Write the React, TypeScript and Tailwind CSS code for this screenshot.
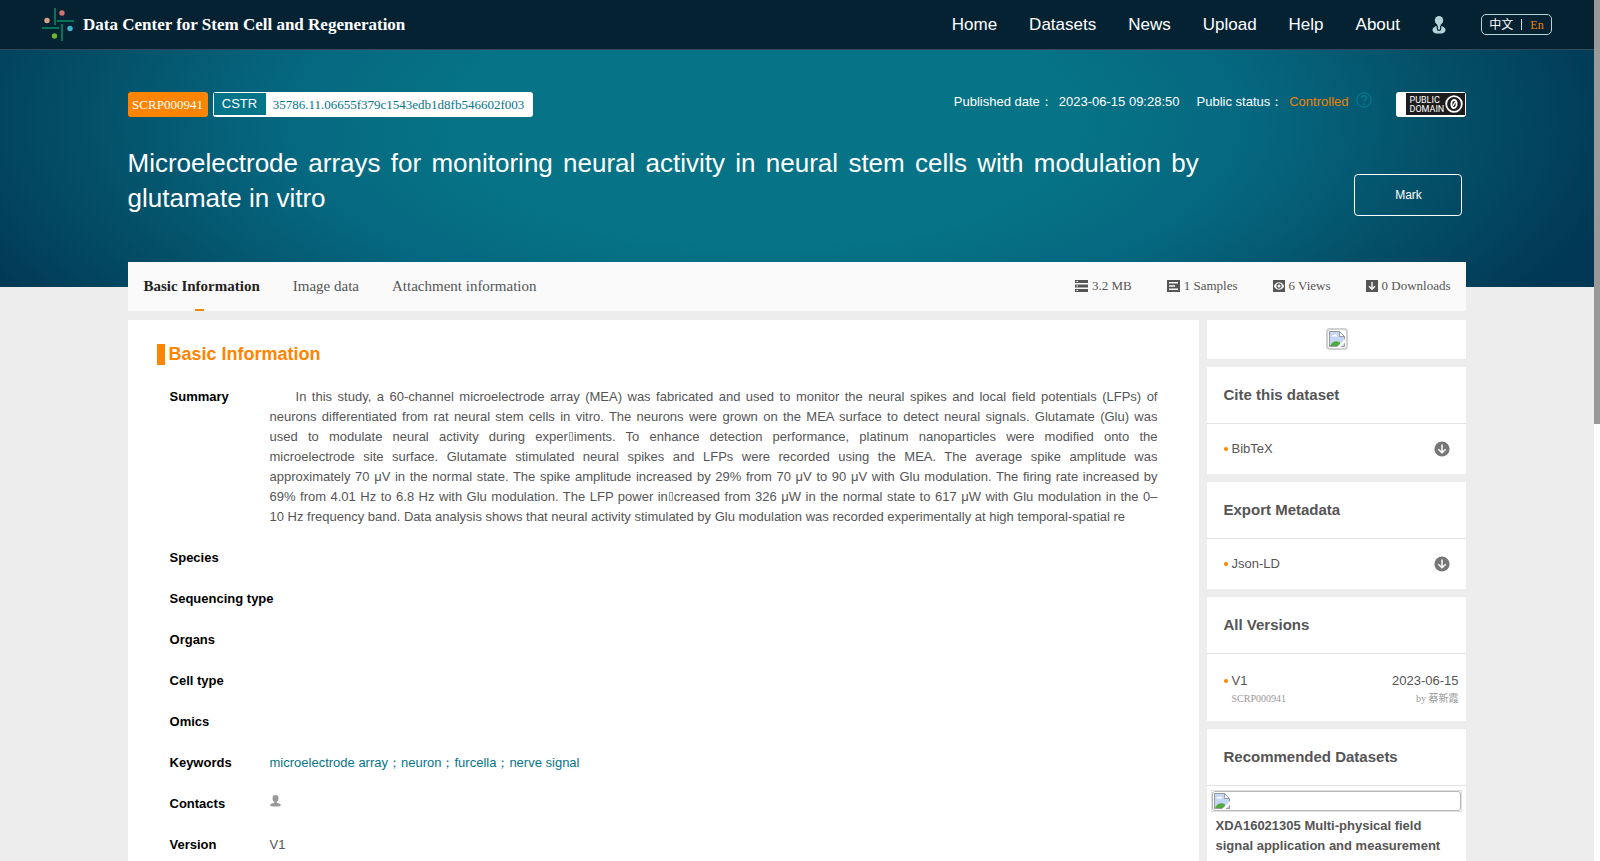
import type { ReactNode } from "react";

const NAV_ITEMS = ["Home", "Datasets", "News", "Upload", "Help", "About"];

// "|" marks an unprintable character in the submitted text
const SUMMARY_LINES = [
  "In this study, a 60-channel microelectrode array (MEA) was fabricated and used to monitor the neural spikes and local field potentials (LFPs) of",
  "neurons differentiated from rat neural stem cells in vitro. The neurons were grown on the MEA surface to detect neural signals. Glutamate (Glu) was",
  "used to modulate neural activity during exper|iments. To enhance detection performance, platinum nanoparticles were modified onto the",
  "microelectrode site surface. Glutamate stimulated neural spikes and LFPs were recorded using the MEA. The average spike amplitude was",
  "approximately 70 μV in the normal state. The spike amplitude increased by 29% from 70 μV to 90 μV with Glu modulation. The firing rate increased by",
  "69% from 4.01 Hz to 6.8 Hz with Glu modulation. The LFP power in|creased from 326 μW in the normal state to 617 μW with Glu modulation in the 0–",
  "10 Hz frequency band. Data analysis shows that neural activity stimulated by Glu modulation was recorded experimentally at high temporal-spatial re",
];

const KEYWORDS = ["microelectrode array", "neuron", "furcella", "nerve signal"];

/* ---------- Icons ---------- */

function Logo() {
  return (
    <svg width="34" height="34" viewBox="0 0 34 34" aria-hidden="true">
      <g fill="#04755a">
        <rect x="12" y="0" width="2" height="17" />
        <rect x="15" y="12" width="17" height="2" />
        <rect x="0" y="19" width="17" height="2" />
        <rect x="19" y="16" width="2" height="17" />
      </g>
      <circle cx="20" cy="5" r="2.700" fill="#d9706c" />
      <circle cx="5" cy="12.500" r="2.700" fill="#d9a184" />
      <circle cx="28" cy="20.500" r="2.700" fill="#3fb2cf" />
      <circle cx="12.500" cy="28" r="2.700" fill="#6cb52d" />
    </svg>
  );
}

function UserIcon() {
  return (
    <svg width="14" height="18" viewBox="0 0 14 18" fill="#b7d3da" aria-hidden="true">
      <ellipse cx="7" cy="4.400" rx="4.200" ry="4.400" />
      <path d="M5.200 8h3.600v2c3 .5 4.700 1.900 4.700 3.900 0 2.300-2.500 3.700-6.500 3.700S.5 16.200.5 13.900c0-2 1.700-3.400 4.700-3.900z" />
      <path d="M5.300 9.800v3c0 1 .7 1.600 1.700 1.600s1.700-.6 1.700-1.600v-3" fill="none" stroke="#052233" strokeWidth="1.200" />
    </svg>
  );
}

function HelpIcon() {
  return (
    <svg width="16" height="16" viewBox="0 0 16 16" fill="none" stroke="#048094" aria-hidden="true">
      <circle cx="8" cy="8" r="7.200" />
      <path d="M5.500 6.200c0-1.500 1.100-2.400 2.500-2.400s2.500.9 2.500 2.200c0 1.600-2.500 1.800-2.500 3.700M8 11.200v1.500" strokeWidth="1.200" />
    </svg>
  );
}

function SizeIcon() {
  return (
    <svg width="13" height="12" viewBox="0 0 13 12" fill="#555" aria-hidden="true">
      <path d="M0 0h13v3H0zM0 4.500h13v3H0zM0 9h13v3H0z" />
      <path d="M1.500 1h1.500v1H1.500zM1.500 5.500h1.500v1H1.500zM1.500 10h1.500v1H1.500z" fill="#fff" />
    </svg>
  );
}

function SampleIcon() {
  return (
    <svg width="13" height="12" viewBox="0 0 13 12" aria-hidden="true">
      <path d="M0 0h13v12H0z" fill="#555" />
      <path d="M2 2h9v1.600H2zM2 5.200h6v1.600H2zM2 8.400h9V10H2z" fill="#fafafa" />
    </svg>
  );
}

function ViewIcon() {
  return (
    <svg width="12" height="12" viewBox="0 0 12 12" aria-hidden="true">
      <path d="M0 0h12v12H0z" fill="#555" />
      <path d="M.8 6C2 3.500 3.800 2.200 6 2.200S10 3.500 11.200 6C10 8.500 8.200 9.800 6 9.800S2 8.500.8 6z" fill="#fafafa" />
      <circle cx="6" cy="6" r="2.100" fill="none" stroke="#555" strokeWidth="1.100" />
    </svg>
  );
}

function DownloadIcon() {
  return (
    <svg width="12" height="12" viewBox="0 0 12 12" aria-hidden="true">
      <path d="M0 0h12v12H0z" fill="#555" />
      <path d="M6 2v7M3 6.200l3 3 3-3" fill="none" stroke="#fafafa" strokeWidth="1.400" />
    </svg>
  );
}

function CircleDownIcon() {
  return (
    <svg width="16" height="16" viewBox="0 0 16 16" aria-hidden="true">
      <circle cx="8" cy="8" r="7.600" fill="#777" />
      <path d="M8 3.500v8M4.300 8.200L8 11.800l3.700-3.600" fill="none" stroke="#fff" strokeWidth="1.500" />
    </svg>
  );
}

function ContactIcon() {
  return (
    <svg width="11" height="12" viewBox="0 0 11 12" fill="#999" aria-hidden="true">
      <ellipse cx="5.500" cy="3.400" rx="3" ry="3.400" />
      <path d="M4.200 6h2.600v1.800c2.200.4 4 1.200 4 2.400 0 1-2 1.300-5.300 1.300S.2 11.200.2 10.200c0-1.200 1.800-2 4-2.400z" />
    </svg>
  );
}

function BrokenImageIcon() {
  return (
    <svg width="16" height="16" viewBox="0 0 16 16" aria-hidden="true">
      <path d="M.5.500h10L15.500 5.500v10H.5z" fill="#c4d6f5" stroke="#9a9a9a" />
      <path d="M10.500.500v5h5z" fill="#fff" stroke="#9a9a9a" />
      <path d="M2.500 5.500a1.500 1.500 0 0 1 2-1.400 2 2 0 0 1 3.500 1.400z" fill="#fff" />
      <path d="M1 15c2-4.500 6-6 10-3.500V15z" fill="#53a93f" />
      <path d="M8 16l8-8v3.500L11.500 16z" fill="#fff" />
    </svg>
  );
}

function PublicDomainBadge() {
  return (
    <a href="#license" className="flex h-[25px] w-[70px] items-start justify-end rounded-[3px] bg-white p-px" aria-label="Public domain">
      <span className="flex h-[22px] w-[59px] items-center justify-between bg-[#1c1c1c] pl-[3px] pr-[2px] font-['Roboto',sans-serif] text-[9px] leading-[9px] text-white">
        <span className="pt-px">
          PUBLIC
          <br />
          DOMAIN
        </span>
        <svg width="18" height="18" viewBox="0 0 18 18" fill="none" stroke="#fff" aria-hidden="true">
          <circle cx="9" cy="9" r="7.800" strokeWidth="1.800" />
          <ellipse cx="9" cy="9" rx="2.600" ry="4" strokeWidth="1.900" />
          <path d="M7.800 11l2.600-4.200" strokeWidth="1.300" />
        </svg>
      </span>
    </a>
  );
}

/* ---------- Parts ---------- */

function Stat({ icon, label }: { icon: ReactNode; label: string }) {
  return (
    <span className="flex items-center gap-1">
      {icon}
      {label}
    </span>
  );
}

function SummaryLine({ text }: { text: string }) {
  const [before, after] = text.split("|");
  return (
    <span className="block whitespace-nowrap first:pl-[26px] [text-align-last:justify] last:[text-align-last:left]">
      {before}
      {after && (
        <>
          <span className="mx-px inline-block h-[9px] w-1 border border-[#999]"></span>
          {after}
        </>
      )}
    </span>
  );
}

function Row({ label, children }: { label: string; children?: ReactNode }) {
  return (
    <div className="flex">
      <dt className="w-[100px] shrink-0 whitespace-nowrap font-bold text-black">{label}</dt>
      <dd className="min-w-0 flex-1">{children}</dd>
    </div>
  );
}

function SideCard({ title, children }: { title: string; children: ReactNode }) {
  return (
    <section className="bg-white">
      <h2 className="border-b border-[#e2e2e2] px-4 text-[15px] font-bold leading-[56px]">{title}</h2>
      {children}
    </section>
  );
}

function Bullet() {
  return <span className="h-1 w-1 shrink-0 rounded-full bg-[#ff8400]"></span>;
}

function ExportLink({ label }: { label: string }) {
  return (
    <a href="#download" className="flex h-[50px] items-center gap-[3px] pl-[17px] pr-4">
      <Bullet />
      <span className="flex-1">{label}</span>
      <CircleDownIcon />
    </a>
  );
}

export default function App() {
  return (
    <div className="flex h-screen overflow-hidden bg-[#ededed] font-['Liberation_Sans',Arial,sans-serif] text-[13px] leading-5 text-[#555]">
      <div className="min-w-0 flex-1 overflow-hidden">
        {/* Top bar */}
        <header className="flex h-[50px] items-center justify-between border-b border-[#33495a] bg-[#052233] px-[42px] text-white">
          <a href="#home" className="flex items-center gap-[7px] font-['Liberation_Serif',serif] text-[17px] font-bold">
            <Logo />
            Data Center for Stem Cell and Regeneration
          </a>
          <nav className="flex items-center gap-8 text-[17px]">
            {NAV_ITEMS.map((item) => (
              <a key={item} href={`#${item.toLowerCase()}`}>
                {item}
              </a>
            ))}
            <a href="#account" aria-label="Account">
              <UserIcon />
            </a>
            <span className="ml-[3px] flex h-[21px] w-[71px] items-center justify-center gap-2 rounded-[5px] border border-[#b7d3da] font-['Liberation_Serif','Noto_Sans_CJK_SC',serif] text-[12px]">
              <a href="#zh">中文</a>
              <span className="h-[11px] w-px bg-[#d5dde0]"></span>
              <a href="#en" className="text-[#f08300]">
                En
              </a>
            </span>
          </nav>
        </header>

        {/* Dataset banner */}
        <div className="h-[237px] bg-[radial-gradient(ellipse_55%_150%_at_48%_30%,#067386_0%,#067386_35%,#056880_55%,#044f68_78%,#003754_100%)] px-[8%] pt-[42px] text-white">
          <div className="flex justify-between">
            <div className="flex gap-[5px] font-['Liberation_Serif',serif]">
              <span className="flex h-[25px] w-20 items-center justify-center rounded-[3px] bg-[#ff8400]">SCRP000941</span>
              <a href="#cstr" className="flex h-[25px] w-80 items-start rounded-[3px] bg-white p-px text-[#047588]">
                <span className="w-[52px] bg-[#047588] text-center font-['Liberation_Sans',sans-serif] leading-[22px] text-white">CSTR</span>
                <span className="flex-1 text-center leading-[23px]">35786.11.06655f379c1543edb1d8fb546602f003</span>
              </a>
            </div>
            <div className="flex items-start">
              <span className="mr-[17px] flex gap-[6px]">
                <span>Published date：</span>
                <span>2023-06-15 09:28:50</span>
              </span>
              <span className="flex gap-[6px]">
                <span>Public status：</span>
                <span className="text-[#f08300]">Controlled</span>
              </span>
              <button type="button" className="ml-2 mr-6" aria-label="About public status">
                <HelpIcon />
              </button>
              <PublicDomainBadge />
            </div>
          </div>
          <div className="flex justify-between pt-[29px]">
            <h1 className="w-[80%] text-justify text-[26px] leading-[35px]">
              Microelectrode arrays for monitoring neural activity in neural stem cells with modulation by glutamate in vitro
            </h1>
            <button type="button" className="mr-1 mt-7 h-[42px] w-[108px] rounded-[4px] border border-white text-[12px]">
              Mark
            </button>
          </div>
        </div>

        <main className="relative -mt-[25px] px-[8%]">
          {/* Tabs and statistics */}
          <div className="flex h-[49px] items-center justify-between bg-[#fafafa] px-4 font-['Liberation_Serif',serif]">
            <div className="flex h-full gap-[33px] text-[15px] leading-[49px]">
              <a href="#basic" className="flex flex-col items-center font-bold text-[#222]">
                <span className="h-[47px]">Basic Information</span>
                <span className="mr-1 h-[2px] w-[9px] bg-[#ff8400]"></span>
              </a>
              <a href="#images">Image data</a>
              <a href="#attachments">Attachment information</a>
            </div>
            <div className="flex gap-[35px] pb-[2px]">
              <Stat icon={<SizeIcon />} label="3.2 MB" />
              <Stat icon={<SampleIcon />} label="1 Samples" />
              <Stat icon={<ViewIcon />} label="6 Views" />
              <Stat icon={<DownloadIcon />} label="0 Downloads" />
            </div>
          </div>

          <div className="mt-[9px] flex items-start gap-2">
            {/* Basic information */}
            <section className="min-w-0 flex-1 bg-white pb-10 pl-[29px] pr-[42px] pt-6">
              <h2 className="flex items-center gap-1 text-[18px] font-bold leading-[21px] text-[#ff8400]">
                <span className="h-[21px] w-2 bg-[#ff8400]"></span>
                Basic Information
              </h2>
              <dl className="flex flex-col gap-[21px] pl-[13px] pt-[22px]">
                <Row label="Summary">
                  <p>
                    {SUMMARY_LINES.map((line) => (
                      <SummaryLine key={line} text={line} />
                    ))}
                  </p>
                </Row>
                <Row label="Species" />
                <Row label="Sequencing type" />
                <Row label="Organs" />
                <Row label="Cell type" />
                <Row label="Omics" />
                <Row label="Keywords">
                  <a href="#keywords" className="text-[#047588]">
                    {KEYWORDS.join("；")}
                  </a>
                </Row>
                <Row label="Contacts">
                  <a href="#contact" className="block pt-px" aria-label="Contact">
                    <ContactIcon />
                  </a>
                </Row>
                <Row label="Version">V1</Row>
              </dl>
            </section>

            {/* Sidebar */}
            <aside className="flex w-[259px] shrink-0 flex-col gap-2">
              <div className="flex h-[39px] justify-center bg-white pt-2">
                <span className="h-[22px] rounded-[4px] border-2 border-[#d0d0d0] p-px">
                  <BrokenImageIcon />
                </span>
              </div>
              <SideCard title="Cite this dataset">
                <ExportLink label="BibTeX" />
              </SideCard>
              <SideCard title="Export Metadata">
                <ExportLink label="Json-LD" />
              </SideCard>
              <SideCard title="All Versions">
                <a href="#v1" className="block h-[67px] pl-[17px] pr-2 pt-[17px]">
                  <span className="flex items-center gap-[3px]">
                    <Bullet />
                    <span className="flex-1">V1</span>
                    <span>2023-06-15</span>
                  </span>
                  <span className="flex justify-between pl-[7px] font-['Liberation_Serif','Noto_Sans_CJK_SC',serif] text-[10px] leading-4 text-[#999]">
                    <span>SCRP000941</span>
                    <span>by 蔡新霞</span>
                  </span>
                </a>
              </SideCard>
              <SideCard title="Recommended Datasets">
                <a href="#recommended" className="block px-1 pb-4 pt-1">
                  <span className="block border border-[#e0e0e0]">
                    <span className="block rounded-[3px] border border-[#b8b8b8] p-px">
                      <BrokenImageIcon />
                    </span>
                  </span>
                  <span className="block px-1 pt-1 font-bold">XDA16021305 Multi-physical field signal application and measurement</span>
                </a>
              </SideCard>
            </aside>
          </div>
        </main>
      </div>

      {/* Scroll track */}
      <div className="w-[6px] shrink-0 bg-white">
        <div className="h-[424px] bg-[#999]"></div>
      </div>
    </div>
  );
}
